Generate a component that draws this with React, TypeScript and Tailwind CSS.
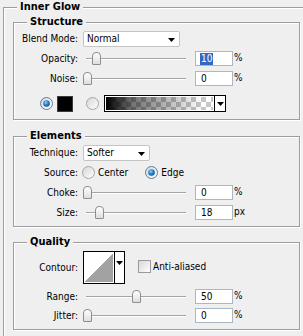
import React from "react";

const font = "font-['DejaVu_Sans_Condensed','DejaVu_Sans','Liberation_Sans',sans-serif]";

function Legend({ children }: { children: React.ReactNode }) {
  return (
    <div className="-mt-[8px] ml-[13px] w-fit h-[14px] px-[3px] bg-[#efefef] font-bold text-[11px] leading-[14px] text-black">
      {children}
    </div>
  );
}

function Group({ title, className = "", children }: { title: string; className?: string; children: React.ReactNode }) {
  return (
    <div className={`border border-[#9d9d9d] shadow-[inset_1px_1px_0_#fff,1px_1px_0_#fff] ${className}`}>
      <Legend>{title}</Legend>
      {children}
    </div>
  );
}

function Label({ children }: { children: React.ReactNode }) {
  return <span className="w-[64px] shrink-0 text-right whitespace-nowrap">{children}</span>;
}

function Arrow() {
  return (
    <svg width="7" height="4" viewBox="0 0 7 4" className="shrink-0">
      <polygon points="0,0 7,0 3.5,4" fill="#000" />
    </svg>
  );
}

function Select({ value, width }: { value: string; width: string }) {
  return (
    <div className={`ml-[5px] flex h-[16px] items-center justify-between rounded-[2px] border border-[#c4c4c4] bg-white pl-[3px] pr-[4px] ${width}`}>
      <span>{value}</span>
      <div className="mt-[3px]">
        <Arrow />
      </div>
    </div>
  );
}

function Slider({ thumb }: { thumb: number }) {
  return (
    <div className="relative ml-[5px] h-full w-[106px] shrink-0">
      <div className="ml-[3px] mt-[7px] h-[2px] w-[100px] border-t border-[#a4a4a4] bg-white" />
      <div
        className="absolute top-[1px] h-[13px] w-[9px] rounded-t-[4px] rounded-b-[1px] border border-[#8e8e8e] bg-gradient-to-b from-white to-[#dedede]"
        style={{ left: thumb }}
      />
    </div>
  );
}

function NumBox({ value, selected = false }: { value: string; selected?: boolean }) {
  return (
    <div className="ml-[6px] flex h-[15px] w-[38px] shrink-0 items-center border border-[#a9b8c9] bg-white pl-[4px]">
      {selected ? (
        <span className="bg-[#316ac5] px-[1px] leading-[12px] text-white">{value}</span>
      ) : (
        <span className="pl-[1px]">{value}</span>
      )}
    </div>
  );
}

function SliderRow({ label, thumb, value, unit = "%", selected = false }: { label: string; thumb: number; value: string; unit?: string; selected?: boolean }) {
  return (
    <div className="flex h-[15px] items-center">
      <Label>{label}</Label>
      <Slider thumb={thumb} />
      <NumBox value={value} selected={selected} />
      <span className="ml-[1px] -mt-[3px]">{unit}</span>
    </div>
  );
}

function Radio({ checked }: { checked: boolean }) {
  return (
    <svg width="13" height="13" viewBox="0 0 13 13" className="shrink-0">
      <defs>
        <linearGradient id={checked ? "rbOn" : "rbOff"} x1="0" y1="0" x2="1" y2="1">
          <stop offset="0" stopColor="#d6d6d6" />
          <stop offset="1" stopColor="#ffffff" />
        </linearGradient>
        <radialGradient id="rbDot" cx="0.4" cy="0.35" r="0.7">
          <stop offset="0" stopColor="#8fd0ff" />
          <stop offset="0.5" stopColor="#2a86cf" />
          <stop offset="1" stopColor="#0b4a86" />
        </radialGradient>
      </defs>
      <circle cx="6.5" cy="6.5" r="6" fill={`url(#${checked ? "rbOn" : "rbOff"})`} stroke={checked ? "#5a7ea3" : "#a6a6a6"} />
      {checked && <circle cx="6.5" cy="6.5" r="3.3" fill="url(#rbDot)" />}
    </svg>
  );
}

export default function App() {
  return (
    <div className={`h-[336px] w-[303px] overflow-hidden bg-[#efefef] pl-[3px] pt-[7px] text-[10px] leading-[15px] text-black ${font}`}>
      <Group title="Inner Glow" className="w-[310px] pb-[40px]">
        <div className="pl-[9px]">
          {/* Structure */}
          <Group title="Structure" className="mt-[8px] w-[287px] pb-[7px]">
            <div className="flex flex-col gap-[5px] pt-[2px]">
              <div className="flex h-[15px] items-center">
                <Label>Blend Mode:</Label>
                <Select value="Normal" width="w-[97px]" />
              </div>
              <SliderRow label="Opacity:" thumb={9} value="10" selected />
              <SliderRow label="Noise:" thumb={0} value="0" />
              <div className="mt-[4px] flex h-[17px] items-center">
                <div className="ml-[26px]">
                  <Radio checked />
                </div>
                <div className="ml-[4px] h-[16px] w-[16px] border border-[#3a3a3a] bg-black" />
                <div className="ml-[13px]">
                  <Radio checked={false} />
                </div>
                <div className="ml-[5px] flex h-[17px] w-[122px] border border-black">
                  <div className="h-full flex-1 border border-white bg-[linear-gradient(to_right,#000_0%,rgba(0,0,0,0.55)_25%,rgba(0,0,0,0)_90%),conic-gradient(#c6c6c6_25%,#ffffff_0_50%,#c6c6c6_0_75%,#ffffff_0)] bg-[length:100%_100%,10px_10px]" />
                  <div className="flex w-[11px] items-center justify-center border-l border-black bg-white">
                    <Arrow />
                  </div>
                </div>
              </div>
            </div>
          </Group>

          {/* Elements */}
          <Group title="Elements" className="mt-[16px] w-[287px] pb-[6px]">
            <div className="flex flex-col gap-[5px] pt-[2px]">
              <div className="flex h-[15px] items-center">
                <Label>Technique:</Label>
                <Select value="Softer" width="w-[67px]" />
              </div>
              <div className="flex h-[15px] items-center">
                <Label>Source:</Label>
                <div className="ml-[4px] flex items-center">
                  <Radio checked={false} />
                  <span className="ml-[3px]">Center</span>
                </div>
                <div className="ml-[17px] flex items-center">
                  <Radio checked />
                  <span className="ml-[3px]">Edge</span>
                </div>
              </div>
              <SliderRow label="Choke:" thumb={0} value="0" />
              <SliderRow label="Size:" thumb={12} value="18" unit="px" />
            </div>
          </Group>

          {/* Quality */}
          <Group title="Quality" className="mt-[15px] w-[287px] pb-[6px]">
            <div className="flex flex-col gap-[5px] pt-[2px]">
              <div className="flex h-[33px] items-center">
                <Label>Contour:</Label>
                <div className="ml-[5px] flex h-[33px] w-[42px] border border-black bg-white">
                  <div className="m-[1px] flex-1 bg-[linear-gradient(to_top_left,#a2a2a2_50%,#ffffff_50%)]" />
                  <div className="flex w-[10px] items-start justify-center border-l border-black pt-[9px]">
                    <Arrow />
                  </div>
                </div>
                <div className="mb-[3px] ml-[13px] flex items-center">
                  <div className="h-[13px] w-[13px] border border-[#9a9a9a] bg-gradient-to-br from-[#d8d8d8] to-white" />
                  <span className="ml-[2px]">Anti-aliased</span>
                </div>
              </div>
              <SliderRow label="Range:" thumb={49} value="50" />
              <div className="-mt-[1px]">
                <SliderRow label="Jitter:" thumb={0} value="0" />
              </div>
            </div>
          </Group>
        </div>
      </Group>
    </div>
  );
}
